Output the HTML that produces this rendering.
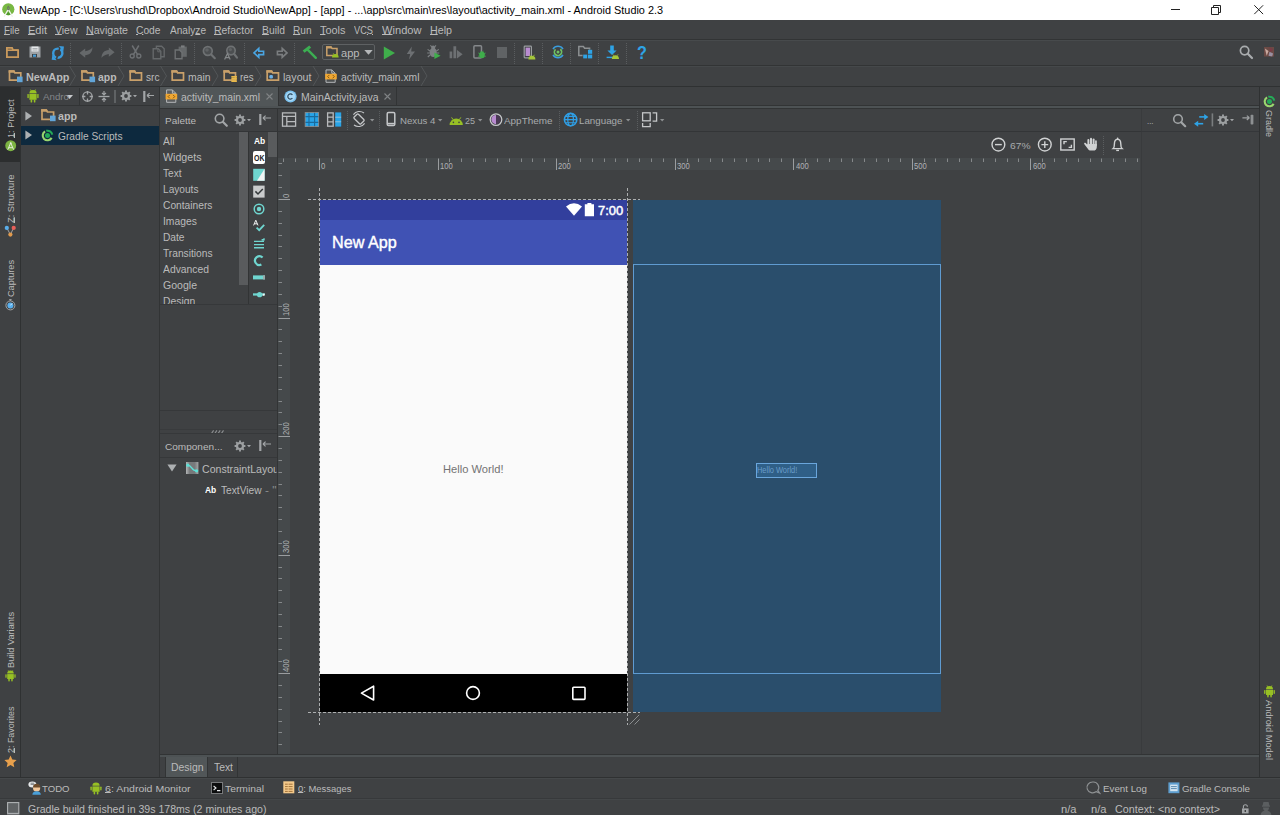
<!DOCTYPE html>
<html><head><meta charset="utf-8"><title>NewApp - Android Studio 2.3</title>
<style>
html,body{margin:0;padding:0;}
body{width:1280px;height:815px;overflow:hidden;background:#3f4143;position:relative;font-family:"Liberation Sans",sans-serif;}
.t{position:absolute;white-space:pre;line-height:1;transform-origin:0 0;}
.t u{text-decoration:underline;text-underline-offset:-0.4px;text-decoration-thickness:1px;}
.b{position:absolute;}
svg{position:absolute;overflow:visible;}
</style></head><body>
<!-- title bar -->
<div class="b" style="left:0;top:0;width:1280px;height:20px;background:#ffffff"></div>
<!-- ===== title bar icons ===== -->
<svg style="left:2px;top:3px" width="13" height="15" viewBox="0 0 13 15">
  <circle cx="6.3" cy="6.3" r="6.1" fill="#78b843"/>
  <path d="M3.4 10.4Q6.3 8.2 9.2 10.4L8.8 11.6Q6.3 12.6 3.8 11.6Z" fill="#4f9a2c"/>
  <path d="M6.3 6.4L2 13.8M6.3 6.4L10.6 13.8" stroke="#f1f3ee" stroke-width="1.3" fill="none"/>
  <path d="M6.3 2.6L7.6 4.4V6.2L6.3 7.4L5 6.2V4.4Z" fill="#6b6f6a"/>
  <circle cx="6.3" cy="5.2" r="0.7" fill="#78b843"/>
</svg>
<div class="b" style="left:1171px;top:9px;width:9px;height:1px;background:#222222"></div>
<svg style="left:1211px;top:4px" width="11" height="11" viewBox="0 0 11 11"><path d="M0.5 3.5h7v7h-7z M2.5 3.5v-2h7v7h-2" fill="none" stroke="#222222" stroke-width="1"/></svg>
<svg style="left:1254px;top:5px" width="10" height="10" viewBox="0 0 10 10"><path d="M0.3 0.3l8.8 8.8M9.1 0.3l-8.8 8.8" fill="none" stroke="#222222" stroke-width="1"/></svg>

<!-- ===== menu / toolbar / navbar separators ===== -->
<div class="b" style="left:0;top:39px;width:1280px;height:1px;background:#323435"></div>
<div class="b" style="left:0;top:40px;width:1280px;height:1px;background:#474a4c"></div>
<div class="b" style="left:0;top:65px;width:1280px;height:1px;background:#323435"></div>
<div class="b" style="left:0;top:66px;width:1280px;height:1px;background:#45484a"></div>
<div class="b" style="left:0;top:86px;width:1280px;height:1px;background:#2f3132"></div>

<!-- toolbar dotted separators -->
<svg style="left:0;top:40px" width="1280" height="26" viewBox="0 0 1280 26">
 <g stroke="#5a5d5f" stroke-width="1" stroke-dasharray="1 1" fill="none">
  <path d="M70.5 3V24M121.5 3V24M194.5 3V24M244.5 3V24M294.5 3V24M514.5 3V24M542.5 3V24M570.5 3V24M598.5 3V24M626.5 3V24"/>
 </g>
</svg>

<!-- ===== toolbar icons (y center 52) ===== -->
<!-- open folder -->
<svg style="left:6px;top:47px" width="13" height="12" viewBox="0 0 13 12"><path d="M0.9 0.9h5.2l1 2.2h5v7H0.9z" fill="none" stroke="#c9995c" stroke-width="1.8"/><path d="M0.9 3.2h11.2" stroke="#c9995c" stroke-width="1.6"/></svg>
<!-- save -->
<svg style="left:29px;top:46px" width="12" height="12" viewBox="0 0 12 12"><path d="M0.5 0.5h11v11h-11z" fill="#9da1a4"/><rect x="2.5" y="0.5" width="7" height="5" fill="#e6e8ea"/><rect x="3" y="8" width="5" height="3.5" fill="#3f4143"/><rect x="4" y="8.6" width="3" height="2.2" fill="#4a9fd8"/><path d="M3.5 2.5h5M3.5 4h5" stroke="#9da1a4" stroke-width="0.8"/></svg>
<!-- sync -->
<svg style="left:51px;top:46px" width="14" height="14" viewBox="0 0 14 14"><circle cx="6.8" cy="7.2" r="4.6" fill="none" stroke="#3a9bdc" stroke-width="2.4"/><path d="M9.4 0L5.2 14" stroke="#3f4143" stroke-width="1.6"/><path d="M7.6 0.2L12.6 0.2L12.6 5.4Z" fill="#3a9bdc" transform="rotate(8 10 3)"/><path d="M6 14L1 14L1 8.8Z" fill="#3a9bdc" transform="rotate(8 3.5 11.5)"/></svg>
<!-- undo / redo -->
<svg style="left:79px;top:47px" width="14" height="12" viewBox="0 0 14 12"><path d="M0.4 6L6.2 1.4V4.2C10.4 3.6 12.6 1.6 13.4 0.2C13.6 5 10.6 8 6.2 8.2V10.8Z" fill="#65686a"/></svg>
<svg style="left:100.5px;top:47px" width="14" height="12" viewBox="0 0 14 12"><path d="M0.4 6L6.2 1.4V4.2C10.4 3.6 12.6 1.6 13.4 0.2C13.6 5 10.6 8 6.2 8.2V10.8Z" fill="#65686a" transform="rotate(180 7 5.6)"/></svg>
<!-- cut -->
<svg style="left:129px;top:45px" width="13" height="14" viewBox="0 0 13 14"><path d="M3.2 0.5L8.6 9.6M9.8 0.5L4.4 9.6" stroke="#6d7073" stroke-width="1.5" fill="none"/><circle cx="3.2" cy="11" r="2" fill="none" stroke="#6d7073" stroke-width="1.4"/><circle cx="9.8" cy="11" r="2" fill="none" stroke="#6d7073" stroke-width="1.4"/></svg>
<!-- copy -->
<svg style="left:151.5px;top:45px" width="14" height="15" viewBox="0 0 14 15"><path d="M4.4 1.2h5.2l2.6 2.6v8H4.4z" fill="#3f4143" stroke="#65686a" stroke-width="1.4"/><path d="M1.2 3.8h5l2.6 2.6v7.4H1.2z" fill="#3f4143" stroke="#65686a" stroke-width="1.4"/><path d="M5.8 4.2v2.6h2.6" fill="none" stroke="#65686a" stroke-width="1"/></svg>
<!-- paste -->
<svg style="left:174px;top:45px" width="14" height="15" viewBox="0 0 14 15"><path d="M4.6 1.6h8.2v10.2H4.6z" fill="#65686a"/><rect x="7" y="0.4" width="3.6" height="2.2" fill="#7a7d7f"/><path d="M1.2 5h4.4l2.4 2.4v6.4H1.2z" fill="#3f4143" stroke="#6e7173" stroke-width="1.4"/></svg>
<!-- find -->
<svg style="left:202px;top:45px" width="14" height="15" viewBox="0 0 14 15"><circle cx="5.8" cy="6" r="4.4" fill="#4c4f51" stroke="#6e7173" stroke-width="1.7"/><circle cx="5" cy="5" r="1.8" fill="#606365"/><path d="M9.2 9.4L12.8 13.2" stroke="#6e7173" stroke-width="2.2" stroke-linecap="round"/></svg>
<!-- replace -->
<svg style="left:224px;top:45px" width="14" height="15" viewBox="0 0 14 15"><circle cx="7" cy="5.6" r="4.2" fill="#4c4f51" stroke="#6e7173" stroke-width="1.7"/><circle cx="6.4" cy="4.6" r="1.6" fill="#606365"/><path d="M10.2 9L13 12.6" stroke="#6e7173" stroke-width="2.2" stroke-linecap="round"/><path d="M0.6 14.6L3.4 8.6L6.2 14.6M1.6 12.6h3.6" fill="none" stroke="#85888a" stroke-width="1.2"/></svg>
<!-- back / forward -->
<svg style="left:253px;top:47px" width="12" height="12" viewBox="0 0 12 12"><path d="M1 5.9L5.8 1.4V4.2H10.6V7.6H5.8V10.4Z" fill="none" stroke="#4aa5e2" stroke-width="1.6" stroke-linejoin="miter"/></svg>
<svg style="left:275.5px;top:47px" width="12" height="12" viewBox="0 0 12 12"><path d="M11 5.9L6.2 1.4V4.2H1.4V7.6H6.2V10.4Z" fill="none" stroke="#7a7d7f" stroke-width="1.6" stroke-linejoin="miter"/></svg>
<!-- hammer (make) -->
<svg style="left:302px;top:45px" width="16" height="15" viewBox="0 0 16 15"><path d="M1.6 6.6L8.2 1.6" stroke="#3cae52" stroke-width="3" fill="none"/><path d="M5.6 4.6L13.8 12.8" stroke="#3cae52" stroke-width="2.4" fill="none" stroke-linecap="round"/></svg>
<!-- run config combo -->
<div class="b" style="left:322px;top:44px;width:53px;height:16px;border:1px solid #5e6163;border-radius:2px;box-sizing:border-box;background:#3e4143"></div>
<svg style="left:326px;top:46px" width="14" height="12" viewBox="0 0 14 12"><path d="M0.8 1h4.2l1.2 1.6H11v7H0.8z" fill="none" stroke="#c9a06a" stroke-width="1.5"/><path d="M0.05 0.25h5.4l1.1 2.3h-6.5z" fill="#c9a06a"/><path d="M6 11.4a3.3 3.3 0 0 1 6.6 0z" fill="#97c024"/><path d="M7.2 7.2l0.8 1.2M11.4 7.2l-0.8 1.2" stroke="#97c024" stroke-width="0.7"/></svg>
<svg style="left:364px;top:50px" width="9" height="5" viewBox="0 0 9 5"><path d="M0.3 0h8.4L4.5 4.8z" fill="#b4b7b9"/></svg>
<!-- run -->
<svg style="left:383px;top:45.8px" width="13" height="14" viewBox="0 0 13 14"><path d="M0.8 0.4L12 7L0.8 13.6Z" fill="#3fae4b"/></svg>
<!-- apply changes (lightning) -->
<svg style="left:406px;top:46px" width="10" height="14" viewBox="0 0 10 14"><path d="M5.8 0.4L0.8 8H4.2L3 13.6L9 5.4H5.2Z" fill="#6d7073"/></svg>
<!-- debug -->
<svg style="left:427px;top:45px" width="14" height="14" viewBox="0 0 14 14"><ellipse cx="6.2" cy="7.4" rx="3.6" ry="4.6" fill="#7d8083"/><circle cx="6.2" cy="2.6" r="2" fill="#7d8083"/><path d="M0.6 4.4L3 6M0.2 8H2.6M0.8 12L3 10M11.8 4.4L9.4 6M12.2 8H9.8M3.4 0.4L4.8 1.8M9 0.4L7.6 1.8" stroke="#7d8083" stroke-width="1.1"/><path d="M7.4 7.4L13.6 10.7L7.4 14Z" fill="#3fae4b"/></svg>
<!-- coverage -->
<svg style="left:449px;top:45px" width="14" height="14" viewBox="0 0 14 14"><path d="M0.6 6.4h2.6v6.8H0.6zM4.4 1.2h2.8v12H4.4z" fill="#6d7073"/><path d="M8 5L13.6 9.2L8 13.4Z" fill="#6d7073"/></svg>
<!-- attach debugger -->
<svg style="left:473px;top:45px" width="13" height="14" viewBox="0 0 13 14"><rect x="0.9" y="0.8" width="7.6" height="12.2" rx="1" fill="none" stroke="#85888b" stroke-width="1.5"/><ellipse cx="9" cy="10" rx="2.8" ry="3.2" fill="#3fae4b"/><path d="M5.4 8L7 9.2M5.2 11.2H6.6M12.6 8L11 9.2M12.8 11.2H11.4M7.6 5.8L8.4 7M10.4 5.8L9.6 7" stroke="#3fae4b" stroke-width="0.9"/></svg>
<!-- stop -->
<div class="b" style="left:496.5px;top:47px;width:10.5px;height:10.8px;background:#606365"></div>
<!-- AVD manager -->
<svg style="left:523px;top:45px" width="13" height="15" viewBox="0 0 13 15"><rect x="1.2" y="1.2" width="7.2" height="11.6" rx="0.8" fill="#3f4143" stroke="#9a9da0" stroke-width="1.2"/><rect x="2.6" y="2.6" width="4.4" height="8.4" fill="#b98cd0"/><path d="M5.4 14.4a3.5 3.6 0 0 1 7 0z" fill="#a4c639"/><path d="M6.4 9.8l0.9 1.3M11.4 9.8l-0.9 1.3" stroke="#a4c639" stroke-width="0.8"/></svg>
<!-- sync gradle -->
<svg style="left:551px;top:45px" width="14" height="14" viewBox="0 0 14 14"><path d="M2 4.2A5.8 5.8 0 0 1 12 4.2M12 9.8A5.8 5.8 0 0 1 2 9.8" fill="none" stroke="#3b9ddd" stroke-width="1.5"/><circle cx="7" cy="7" r="3.6" fill="none" stroke="#6fc163" stroke-width="1.7" stroke-dasharray="17 5.6" transform="rotate(-50 7 7)"/><circle cx="7" cy="7" r="1.5" fill="#6fc163"/></svg>
<!-- project structure -->
<svg style="left:578px;top:45px" width="15" height="14" viewBox="0 0 15 14"><path d="M0.8 1.6h4.6l1.2 1.6H11.6v7.4H0.8z" fill="none" stroke="#8d9092" stroke-width="1.5"/><rect x="4.6" y="4.6" width="10" height="9.2" fill="#3f4143"/><rect x="5.2" y="9.6" width="4" height="3.8" fill="#2ea3e6"/><rect x="10" y="9.6" width="4.2" height="3.8" fill="#2ea3e6"/><rect x="10" y="4.8" width="4.2" height="4" fill="#2ea3e6"/></svg>
<!-- sdk manager -->
<svg style="left:606px;top:45px" width="14" height="15" viewBox="0 0 14 15"><path d="M4.2 0.6h3.6v4.8h2.8L6 10L1.4 5.4h2.8z" fill="#2ea3e6"/><path d="M0.6 12.4h6" stroke="#2ea3e6" stroke-width="1.4"/><path d="M5.8 14a3.6 3.8 0 0 1 7.2 0z" fill="#a4c639"/><path d="M6.8 9.4l0.9 1.3M12 9.4l-0.9 1.3" stroke="#a4c639" stroke-width="0.8"/></svg>
<!-- help -->
<span class="t" style="left:636.5px;top:43.6px;font-size:18px;font-weight:bold;color:#2ea3e6;transform:scaleX(0.9)">?</span>
<!-- search everywhere + avatar -->
<svg style="left:1239px;top:45px" width="14" height="14" viewBox="0 0 14 14"><circle cx="5.6" cy="5.6" r="4.2" fill="none" stroke="#a9acae" stroke-width="1.7"/><path d="M8.8 8.8L13 13" stroke="#a9acae" stroke-width="2.2" stroke-linecap="round"/></svg>
<svg style="left:1264px;top:47px" width="10" height="9.6" viewBox="0 0 11 12" preserveAspectRatio="none"><rect x="0" y="0" width="11" height="12" fill="#6b4a45"/><path d="M1 2L5 5L3 11Z" fill="#c9a9a0"/><path d="M6 0L10 3L7 7Z" fill="#7b3b46"/><path d="M6 6L10 8L9 12L5 11Z" fill="#9a8fa0"/></svg>

<!-- ===== navbar (breadcrumbs) y 67-85, center 76 ===== -->
<svg style="left:0;top:66px" width="440" height="20" viewBox="0 0 440 20">
 <g fill="none" stroke="#525557" stroke-width="1">
  <path d="M69.5 0L75.5 10L69.5 20M118 0L124 10L118 20M160.5 0L166.5 10L160.5 20M212 0L218 10L212 20M255 0L261 10L255 20M313 0L319 10L313 20M421 0L427 10L421 20"/>
 </g>
 <!-- module folders -->
 <g id="modf">
  <path d="M9.5 5h4.4l1 1.8H20.8v7.4H9.5z" fill="none" stroke="#c9a06a" stroke-width="1.7"/><path d="M8.65 4.15h5.7l1.1 2.5h-6.8z" fill="#c9a06a"/>
  <rect x="17" y="10.6" width="5.6" height="5.6" fill="#62a5d8"/>
 </g>
 <g transform="translate(72.5 0)">
  <path d="M9.5 5h4.4l1 1.8H20.8v7.4H9.5z" fill="none" stroke="#c9a06a" stroke-width="1.7"/><path d="M8.65 4.15h5.7l1.1 2.5h-6.8z" fill="#c9a06a"/>
  <rect x="17" y="10.6" width="5.6" height="5.6" fill="#62a5d8"/>
 </g>
 <!-- plain folders: src, main -->
 <path d="M130.2 5h4.4l1 1.8H141.5v7.4H130.2z" fill="none" stroke="#c9a06a" stroke-width="1.7"/><path d="M129.35 4.15h5.7l1.1 2.5h-6.8z" fill="#c9a06a"/>
 <path d="M172.2 5h4.4l1 1.8H183.5v7.4H172.2z" fill="none" stroke="#c9a06a" stroke-width="1.7"/><path d="M171.35 4.15h5.7l1.1 2.5h-6.8z" fill="#c9a06a"/>
 <!-- res folder -->
 <path d="M224.2 5h4.4l1 1.8H235.5v7.4H224.2z" fill="none" stroke="#c9a06a" stroke-width="1.7"/><path d="M223.35 4.15h5.7l1.1 2.5h-6.8z" fill="#c9a06a"/>
 <g fill="#e9b949"><rect x="231.2" y="10" width="5.8" height="1.7" rx="0.6"/><rect x="231.2" y="12.1" width="5.8" height="1.7" rx="0.6"/><rect x="231.2" y="14.2" width="5.8" height="1.7" rx="0.6"/></g>
 <!-- layout folder -->
 <path d="M267.2 5h4.4l1 1.8H278.5v7.4H267.2z" fill="none" stroke="#c9a06a" stroke-width="1.7"/><path d="M266.35 4.15h5.7l1.1 2.5h-6.8z" fill="#c9a06a"/>
 <rect x="269.4" y="9.1" width="3.5" height="3.4" rx="1.2" fill="#6db1e6"/>
 <!-- xml file -->
 <g>
  <path d="M326 3.9h5.8l3.4 3.4v9H326z" fill="#4c4f51" stroke="#b4b7b9" stroke-width="1"/>
  <path d="M331.8 3.9v3.4h3.4" fill="none" stroke="#b4b7b9" stroke-width="1"/>
  <rect x="325.2" y="7.8" width="11.6" height="5.6" fill="#f0a732"/>
  <path d="M329.4 8.9l-1.7 1.7 1.7 1.7M332.6 8.9l1.7 1.7-1.7 1.7" fill="none" stroke="#7a5210" stroke-width="0.9"/>
 </g>
</svg>

<!-- ===== left tool stripe ===== -->
<div class="b" style="left:0;top:87px;width:20px;height:691px;background:#3f4143"></div>
<div class="b" style="left:0;top:87px;width:20px;height:75px;background:#2c2e2f"></div>
<div class="b" style="left:20px;top:87px;width:1px;height:691px;background:#2f3132"></div>
<!-- project icon (android studio) -->
<svg style="left:4.8px;top:140px" width="11.4" height="11.4" viewBox="0 0 13 13"><circle cx="6.5" cy="6.5" r="6.2" fill="#7cb342"/><path d="M3.2 11L6.5 3.4L9.8 11M4.4 8.8h4.2" fill="none" stroke="#e8efe2" stroke-width="1.1"/><circle cx="6.5" cy="3.6" r="1.1" fill="#e8efe2"/></svg>
<!-- structure icon -->
<svg style="left:4px;top:225px" width="13" height="13" viewBox="0 0 13 13"><path d="M2.8 2.9L6.4 9.6L9.6 2.9" fill="none" stroke="#a9acae" stroke-width="0.9"/><circle cx="2.8" cy="2.9" r="2.1" fill="#5aaeea"/><circle cx="9.7" cy="2.9" r="2.1" fill="#e8605a"/><circle cx="6.4" cy="9.6" r="2.1" fill="#e09a4e"/></svg>
<!-- captures icon -->
<svg style="left:4px;top:298px" width="13" height="13" viewBox="0 0 13 13"><circle cx="6.4" cy="7.4" r="4.5" fill="#3f4143" stroke="#a2a5a7" stroke-width="1"/><circle cx="6.4" cy="7.4" r="3" fill="#5ab0ee"/><path d="M5.2 1.6h2.4M6.4 1.6v1.4" stroke="#a2a5a7" stroke-width="1"/><path d="M6.4 7.4L8.2 5.4" stroke="#e8f2fa" stroke-width="0.9"/></svg>
<!-- build variants android -->
<svg style="left:5px;top:670px" width="11" height="12" viewBox="0 0 12 13"><g fill="#97c024"><path d="M2.4 4.4h7.2v5.4H2.4z"/><path d="M2.4 3.8a3.6 3.2 0 0 1 7.2 0z"/><rect x="0.4" y="4.5" width="1.4" height="4" rx="0.7"/><rect x="10.2" y="4.5" width="1.4" height="4" rx="0.7"/><rect x="3.6" y="9.4" width="1.6" height="3" rx="0.7"/><rect x="6.8" y="9.4" width="1.6" height="3" rx="0.7"/><path d="M3.4 0.2l1 1.6M8.6 0.2l-1 1.6" stroke="#97c024" stroke-width="0.7"/></g></svg>
<!-- favorites star -->
<svg style="left:4px;top:755px" width="13" height="13" viewBox="0 0 13 13"><path d="M6.5 0.6L8.3 4.6L12.6 5L9.4 7.9L10.3 12.2L6.5 10L2.7 12.2L3.6 7.9L0.4 5L4.7 4.6Z" fill="#e8a04c"/></svg>

<!-- ===== project panel (x 21-159) ===== -->
<div class="b" style="left:21px;top:87px;width:139px;height:19px;background:#3f4143"></div>
<div class="b" style="left:21px;top:105px;width:139px;height:1px;background:#323435"></div>
<div class="b" style="left:159px;top:87px;width:1px;height:691px;background:#323435"></div>
<!-- header icons -->
<svg style="left:27px;top:89px" width="12" height="14" viewBox="0 0 12 14"><g fill="#97c024"><path d="M2.4 4.8h7.2v6H2.4z"/><path d="M2.4 4.2a3.6 3.2 0 0 1 7.2 0z"/><rect x="0.4" y="4.9" width="1.4" height="4.4" rx="0.7"/><rect x="10.2" y="4.9" width="1.4" height="4.4" rx="0.7"/><rect x="3.6" y="10.4" width="1.6" height="3.2" rx="0.7"/><rect x="6.8" y="10.4" width="1.6" height="3.2" rx="0.7"/><path d="M3.4 0.4l1 1.6M8.6 0.4l-1 1.6" stroke="#97c024" stroke-width="0.7"/></g></svg>
<svg style="left:66px;top:95px" width="7" height="4" viewBox="0 0 7 4"><path d="M0 0h7L3.5 4z" fill="#c8cacc"/></svg>
<div class="b" style="left:79px;top:88px;width:1px;height:17px;background:#323435"></div>
<svg style="left:82px;top:91px" width="11" height="11" viewBox="0 0 11 11"><circle cx="5.5" cy="5.5" r="4.6" fill="none" stroke="#a2a5a7" stroke-width="1.3"/><path d="M5.5 0v3.4M5.5 7.6V11M0 5.5h3.4M7.6 5.5H11" stroke="#a2a5a7" stroke-width="1.3"/></svg>
<svg style="left:98px;top:91px" width="12" height="11" viewBox="0 0 12 11"><path d="M0.5 5.5h11" stroke="#a2a5a7" stroke-width="1.3"/><path d="M6 0v3.6M4 1.8L6 3.8L8 1.8M6 11V7.4M4 9.2L6 7.2L8 9.2" fill="none" stroke="#a2a5a7" stroke-width="1.2"/></svg>
<div class="b" style="left:114px;top:90px;width:2px;height:13px;background:#5f6264"></div>
<svg style="left:120px;top:90px" width="17" height="12" viewBox="0 0 17 12"><g transform="translate(6 6)"><circle r="3" fill="none" stroke="#9da0a2" stroke-width="2.2"/><g stroke="#9da0a2" stroke-width="1.9"><path d="M0-5.4V-3.6M0 5.4V3.6M-5.4 0H-3.6M5.4 0H3.6M-3.8-3.8L-2.6-2.6M3.8 3.8L2.6 2.6M-3.8 3.8L-2.6 2.6M3.8-3.8L2.6-2.6"/></g></g><path d="M13 5h4l-2 2.2z" fill="#a2a5a7"/></svg>
<svg style="left:143px;top:91px" width="11" height="11" viewBox="0 0 11 11"><rect x="0.2" y="0" width="2.2" height="11" fill="#a2a5a7"/><path d="M4 4.5h7M4 4.5l2.6-2.4M4 4.5l2.6 2.4" fill="none" stroke="#a2a5a7" stroke-width="1.2"/></svg>
<!-- tree rows -->
<div class="b" style="left:21px;top:126px;width:138px;height:19px;background:#0d293e"></div>
<svg style="left:25px;top:111px" width="8" height="10" viewBox="0 0 8 10"><path d="M0.4 0.6L7 5L0.4 9.4Z" fill="#adb0b2"/></svg>
<svg style="left:25px;top:130px" width="8" height="10" viewBox="0 0 8 10"><path d="M0.4 0.6L7 5L0.4 9.4Z" fill="#adb0b2"/></svg>
<svg style="left:41px;top:109px" width="15" height="13" viewBox="0 0 15 13"><path d="M1 1.2h4.4l1 1.8H12.6v7.4H1z" fill="none" stroke="#c9a06a" stroke-width="1.7"/><path d="M0.15 0.35h5.7l1.1 2.5h-6.8z" fill="#c9a06a"/><rect x="9" y="6.6" width="5.6" height="5.6" fill="#62a5d8"/></svg>
<svg style="left:41px;top:129px" width="13" height="13" viewBox="0 0 13 13"><path d="M10.66 8.90A4.8 4.8 0 1 1 4.10 2.34" fill="none" stroke="#9ad76f" stroke-width="2.1"/><path d="M5.26 1.86A4.8 4.8 0 0 1 11.23 5.67" fill="none" stroke="#25ab58" stroke-width="2.1"/><circle cx="6.5" cy="6.5" r="2.5" fill="#25ab58"/></svg>

<!-- ===== editor tabs (y 87-105) ===== -->
<div class="b" style="left:160px;top:87px;width:118px;height:19px;background:#515658"></div>
<div class="b" style="left:278px;top:105px;width:981px;height:1px;background:#323435"></div>
<div class="b" style="left:160px;top:106px;width:1099px;height:2px;background:#4d5254"></div>
<div class="b" style="left:160px;top:108px;width:1099px;height:1px;background:#323435"></div>
<div class="b" style="left:278px;top:87px;width:1px;height:18px;background:#323435"></div>
<div class="b" style="left:396px;top:87px;width:1px;height:18px;background:#323435"></div>
<!-- xml file icon in tab -->
<svg style="left:165px;top:89px" width="13" height="14" viewBox="0 0 13 14"><path d="M1.6 0.9h5.8l3.4 3.4v9H1.6z" fill="#5a5d5f" stroke="#b4b7b9" stroke-width="1"/><path d="M7.4 0.9v3.4h3.4" fill="none" stroke="#b4b7b9" stroke-width="1"/><rect x="0.6" y="4.8" width="11.6" height="5.6" fill="#f0a732"/><path d="M4.8 5.9l-1.7 1.7 1.7 1.7M8 5.9l1.7 1.7-1.7 1.7" fill="none" stroke="#7a5210" stroke-width="0.9"/></svg>
<svg style="left:266px;top:93px" width="7" height="7" viewBox="0 0 7 7"><path d="M0.5 0.5l6 6M6.5 0.5l-6 6" stroke="#808385" stroke-width="1.1"/></svg>
<!-- class icon -->
<svg style="left:284px;top:90px" width="13" height="13" viewBox="0 0 13 13"><circle cx="6.5" cy="6.5" r="6.1" fill="#7cc2ef"/><circle cx="6.5" cy="6.5" r="4.6" fill="#a9d8f5"/><path d="M8.4 4.8A2.6 2.6 0 1 0 8.4 8.2" fill="none" stroke="#2b4a60" stroke-width="1.2"/></svg>
<svg style="left:384px;top:93px" width="7" height="7" viewBox="0 0 7 7"><path d="M0.5 0.5l6 6M6.5 0.5l-6 6" stroke="#808385" stroke-width="1.1"/></svg>

<!-- ===== palette ===== -->
<div class="b" style="left:160px;top:131px;width:981px;height:1px;background:#333537"></div>
<div class="b" style="left:277px;top:109px;width:1px;height:647px;background:#323435"></div>
<!-- header icons -->
<svg style="left:214px;top:113px" width="14" height="14" viewBox="0 0 14 14"><circle cx="5.6" cy="5.6" r="4.3" fill="none" stroke="#a2a5a7" stroke-width="1.6"/><path d="M8.8 8.8L12.8 12.8" stroke="#a2a5a7" stroke-width="2.2" stroke-linecap="round"/></svg>
<svg style="left:234px;top:114px" width="17" height="12" viewBox="0 0 17 12"><g transform="translate(6 6)"><circle r="3" fill="none" stroke="#9da0a2" stroke-width="2.2"/><g stroke="#9da0a2" stroke-width="1.9"><path d="M0-5.4V-3.6M0 5.4V3.6M-5.4 0H-3.6M5.4 0H3.6M-3.8-3.8L-2.6-2.6M3.8 3.8L2.6 2.6M-3.8 3.8L-2.6 2.6M3.8-3.8L2.6-2.6"/></g></g><path d="M13 5h4l-2 2.2z" fill="#a2a5a7"/></svg>
<svg style="left:259px;top:114px" width="12" height="11" viewBox="0 0 12 11"><rect x="0.2" y="0" width="2.2" height="11" fill="#a2a5a7"/><path d="M4 4h8M4 4l2.6-2.4M4 4l2.6 2.4" fill="none" stroke="#a2a5a7" stroke-width="1.2"/></svg>
<!-- list scrollbars -->
<div class="b" style="left:239px;top:132px;width:9px;height:153px;background:#595b5d"></div>
<div class="b" style="left:248px;top:132px;width:1px;height:172px;background:#323435"></div>
<div class="b" style="left:268px;top:132px;width:9px;height:25px;background:#595b5d"></div>
<div class="b" style="left:160px;top:304px;width:117px;height:1px;background:#36383a"></div>
<!-- palette widget icons -->
<span class="t" style="left:253.8px;top:136.2px;font-size:9.4px;font-weight:bold;color:#ffffff;transform:scaleX(0.9)">Ab</span>
<div class="b" style="left:253px;top:151px;width:11.5px;height:12.5px;background:#ffffff;border-radius:2px"></div>
<span class="t" style="left:254px;top:153.5px;font-size:9px;font-weight:bold;color:#222;transform:scaleX(0.78)">OK</span>
<svg style="left:253px;top:168px" width="12" height="124" viewBox="0 0 12 124">
 <rect x="0.2" y="0.8" width="11.4" height="12" fill="#6fd6d0"/><path d="M11.6 0.8V12.8H4z" fill="#f2f4f4"/>
 <rect x="0.2" y="17.6" width="11.4" height="12" fill="#c9cbcc"/><path d="M2.4 23.4l2.6 2.6 4.8-5" fill="none" stroke="#33383a" stroke-width="1.5"/>
 <circle cx="6" cy="41" r="4.8" fill="none" stroke="#6fd6d0" stroke-width="1.5"/><circle cx="6" cy="41" r="2.2" fill="#6fd6d0"/>
 <path d="M0.6 57.4L2.8 52.2L5 57.4M1.4 55.8h2.8" fill="none" stroke="#f2f4f4" stroke-width="1"/><path d="M3.6 59.6l2.6 2.6 5-5.4" fill="none" stroke="#6fd6d0" stroke-width="1.8"/>
 <path d="M1 73.4h10M1 76.6h10M1 79.8h10M8.6 71.8h2.4v-1.6" fill="none" stroke="#6fd6d0" stroke-width="1.4"/>
 <path d="M9.6 89.6A4.4 4.4 0 1 0 8.4 96.6" fill="none" stroke="#6fd6d0" stroke-width="2.2"/>
 <rect x="0" y="107.4" width="12" height="4" fill="#6fd6d0"/><rect x="10" y="107.4" width="2" height="4" fill="#9aa"/>
 <path d="M0 126.4" /><rect x="0" y="125.4" width="12" height="1.6" fill="#6fd6d0" transform="translate(0 0)"/>
</svg>
<svg style="left:253px;top:289px" width="12" height="12" viewBox="0 0 12 12"><rect x="0" y="4.8" width="10" height="1.8" fill="#6fd6d0"/><circle cx="6.6" cy="5.7" r="2.6" fill="#6fd6d0"/><rect x="9.8" y="4.6" width="1.8" height="2.2" fill="#f2f4f4"/></svg>
<!-- palette bottom / splitter -->
<div class="b" style="left:160px;top:410px;width:117px;height:1px;background:#36383a"></div>
<div class="b" style="left:160px;top:429px;width:117px;height:1px;background:#393b3d"></div>
<svg style="left:211px;top:429.6px" width="14" height="4" viewBox="0 0 14 4"><path d="M0.6 3.4l2-3M3.9 3.4l2-3M7.2 3.4l2-3M10.5 3.4l2-3" stroke="#8a8d8f" stroke-width="1.1"/></svg>
<div class="b" style="left:160px;top:433px;width:117px;height:1px;background:#36383a"></div>
<!-- component tree header icons -->
<svg style="left:234px;top:440px" width="17" height="12" viewBox="0 0 17 12"><g transform="translate(6 6)"><circle r="3" fill="none" stroke="#9da0a2" stroke-width="2.2"/><g stroke="#9da0a2" stroke-width="1.9"><path d="M0-5.4V-3.6M0 5.4V3.6M-5.4 0H-3.6M5.4 0H3.6M-3.8-3.8L-2.6-2.6M3.8 3.8L2.6 2.6M-3.8 3.8L-2.6 2.6M3.8-3.8L2.6-2.6"/></g></g><path d="M13 5h4l-2 2.2z" fill="#a2a5a7"/></svg>
<svg style="left:259px;top:440px" width="12" height="11" viewBox="0 0 12 11"><rect x="0.2" y="0" width="2.2" height="11" fill="#a2a5a7"/><path d="M4 4h8M4 4l2.6-2.4M4 4l2.6 2.4" fill="none" stroke="#a2a5a7" stroke-width="1.2"/></svg>
<div class="b" style="left:160px;top:457px;width:117px;height:1px;background:#36383a"></div>
<!-- component tree rows -->
<svg style="left:167px;top:464px" width="10" height="8" viewBox="0 0 10 8"><path d="M0.4 0.4h9.2L5 7.6z" fill="#adb0b2"/></svg>
<svg style="left:185.8px;top:462px" width="13" height="12" viewBox="0 0 13 12"><defs><linearGradient id="clg" x1="0" x2="1" y1="0" y2="0"><stop offset="0" stop-color="#b4b6b7"/><stop offset="0.3" stop-color="#77797b"/><stop offset="0.7" stop-color="#77797b"/><stop offset="1" stop-color="#a4a6a7"/></linearGradient></defs><rect x="0" y="0" width="12.4" height="12" fill="url(#clg)"/><path d="M1.6 3.2C6.4 3.2 5 8.8 10.6 8.8" fill="none" stroke="#5ee0d6" stroke-width="1.4"/><circle cx="1.8" cy="3.2" r="1.6" fill="#5ee0d6"/><circle cx="10.6" cy="8.8" r="1.6" fill="#5ee0d6"/></svg>
<span class="t" style="left:205px;top:484.9px;font-size:9.4px;font-weight:bold;color:#ffffff;transform:scaleX(0.9)">Ab</span>

<!-- ===== design surface toolbar (y 109-131) ===== -->
<svg style="left:278px;top:109px" width="400" height="22" viewBox="0 0 400 22">
 <g stroke="#5a5d5f" stroke-width="1" stroke-dasharray="1 1" fill="none"><path d="M69.5 2V21M101.5 2V21M281.5 2V21M359.5 2V21"/></g>
 <!-- design view -->
 <g fill="none" stroke="#b8babc" stroke-width="1.3"><rect x="4.5" y="3.9" width="13.1" height="13.3"/><path d="M4.5 7.4h13.1M8.8 7.4v9.8M8.8 12.6h8.8"/></g>
 <!-- blueprint view (selected) -->
 <rect x="27.2" y="3.6" width="13.4" height="13.8" fill="#28a4e8" stroke="#8d9092" stroke-width="0.9"/><g stroke="#1a6a9c" stroke-width="1.1"><path d="M31 3.8v13.4M36.6 3.8v13.4M27.4 7.6h13M27.4 13.4h13"/></g>
 <!-- both -->
 <g fill="none" stroke="#b8babc" stroke-width="1.3"><rect x="49.6" y="3.9" width="5.6" height="13.3"/><path d="M49.6 8.2h5.6M49.6 12.8h5.6"/></g>
 <rect x="57.2" y="3.4" width="6" height="14.2" fill="#28a4e8"/><path d="M57.2 8.2h6M57.2 12.8h6" stroke="#a9c6d8" stroke-width="0.8"/>
 <!-- orientation -->
 <g transform="rotate(-45 81 10)" fill="none" stroke="#c4c6c8" stroke-width="1.3"><rect x="78" y="5.2" width="6" height="9.6" rx="1"/></g>
 <path d="M75.4 5.6A7.4 7.4 0 0 1 86 4M86.6 14.4A7.4 7.4 0 0 1 76 16" fill="none" stroke="#c4c6c8" stroke-width="1.1"/>
 <path d="M92 10h4.4l-2.2 2.4z" fill="#8d9092"/>
 <!-- device -->
 <rect x="109.2" y="3.4" width="7.6" height="13.2" rx="1.4" fill="none" stroke="#c4c6c8" stroke-width="1.5"/><path d="M109.2 14.6h7.6" stroke="#c4c6c8" stroke-width="1.6"/>
 <path d="M160 10h4.4l-2.2 2.4z" fill="#8d9092"/>
 <!-- api android -->
 <g fill="#97c024"><path d="M171.6 16a6.6 6.4 0 0 1 13.2 0z"/><path d="M173.6 8.4l1.4 2.2M182.8 8.4l-1.4 2.2" stroke="#97c024" stroke-width="1"/></g><circle cx="175.4" cy="13.4" r="0.8" fill="#3f4143"/><circle cx="181" cy="13.4" r="0.8" fill="#3f4143"/>
 <path d="M200 10h4.4l-2.2 2.4z" fill="#8d9092"/>
 <!-- theme -->
 <circle cx="218" cy="10.6" r="5.8" fill="#3f4143" stroke="#c4c6c8" stroke-width="1.3"/><path d="M218 6a4.6 4.6 0 0 0 0 9.2z" fill="#b88bd0"/><path d="M218 6a4.6 4.6 0 0 1 0 9.2z" fill="#4a3a55"/>
 <!-- globe -->
 <circle cx="292.6" cy="10.6" r="6.2" fill="none" stroke="#2f9fe6" stroke-width="1.6"/><ellipse cx="292.6" cy="10.6" rx="2.8" ry="6.2" fill="none" stroke="#2f9fe6" stroke-width="1.2"/><path d="M286.4 10.6h12.4M287.4 7.4h10.4M287.4 13.8h10.4" stroke="#2f9fe6" stroke-width="1.1"/>
 <path d="M348 10h4.4l-2.2 2.4z" fill="#8d9092"/>
 <!-- layout variants -->
 <g fill="none" stroke="#c4c6c8" stroke-width="1.3"><rect x="364.6" y="3.8" width="7.6" height="8"/><path d="M374.6 3.8h4v8.4h-4M364.6 14v3.6h7.6V14"/></g>
 <path d="M382 10h4.4l-2.2 2.4z" fill="#8d9092"/>
</svg>
<!-- zoom controls row (y 132-157) -->
<svg style="left:988px;top:134px" width="140" height="22" viewBox="0 0 140 22">
 <g fill="none" stroke="#d0d2d3" stroke-width="1.4">
  <circle cx="10.4" cy="10.6" r="6.4"/><path d="M7 10.6h6.8"/>
  <circle cx="56.8" cy="10.6" r="6.4"/><path d="M53.4 10.6h6.8M56.8 7.2v6.8"/>
  <rect x="72.8" y="5" width="13.4" height="11"/>
 </g>
 <path d="M76 10.2V7.6h2.8M83.4 10.8v2.6h-2.8" fill="none" stroke="#d0d2d3" stroke-width="1.4"/>
 <g fill="#d0d2d3"><rect x="99.4" y="5" width="2" height="7" rx="1"/><rect x="102" y="3.8" width="2" height="8" rx="1"/><rect x="104.6" y="4.4" width="2" height="8" rx="1"/><rect x="107.1" y="6.2" width="1.7" height="6" rx="0.85"/><path d="M99.4 10h9.4v3.2c0 2-1.6 3.4-3.4 3.4h-2.6c-1.2 0-2.2-0.6-2.8-1.6l-3.8-5c-0.5-0.9 0.7-1.7 1.5-1l1.7 1.8z"/></g>
 <path d="M115.5 2V21" stroke="#5a5d5f" stroke-width="1" stroke-dasharray="1 1"/>
 <path d="M125.2 14.6C126.4 13.6 126.4 12 126.4 10C126.4 7 128 5.4 129.6 5.4C131.2 5.4 132.8 7 132.8 10C132.8 12 132.8 13.6 134 14.6Z" fill="none" stroke="#d0d2d3" stroke-width="1.4"/><circle cx="129.6" cy="4.4" r="0.9" fill="#d0d2d3"/><path d="M128.2 16.4h2.8" stroke="#d0d2d3" stroke-width="1.4"/>
</svg>
<!-- ===== right (properties) panel x 1140-1258 ===== -->
<div class="b" style="left:1141px;top:109px;width:1px;height:646px;background:#393b3d"></div>
<div class="b" style="left:1141px;top:131px;width:118px;height:1px;background:#35373a"></div>
<svg style="left:1170px;top:112px" width="90" height="18" viewBox="0 0 90 18">
 <circle cx="8" cy="7" r="4.3" fill="none" stroke="#a2a5a7" stroke-width="1.6"/><path d="M11.2 10.2L15.2 14.2" stroke="#a2a5a7" stroke-width="2.2" stroke-linecap="round"/>
 <g fill="#2ea3e6" stroke="#2ea3e6" transform="translate(-0.8 0.3)"><path d="M30 4.6h6" stroke-width="1.6" fill="none"/><path d="M35 1.6L39.2 4.6L35 7.6Z" stroke="none"/><path d="M34 11.4h-6" stroke-width="1.6" fill="none"/><path d="M29 8.4L24.8 11.4L29 14.4Z" stroke="none"/></g>
 <rect x="41.6" y="1.4" width="1.6" height="13" fill="#7a7d7f"/>
 <g transform="translate(53 8)"><circle r="3" fill="none" stroke="#9da0a2" stroke-width="2.2"/><g stroke="#9da0a2" stroke-width="1.9"><path d="M0-5.4V-3.6M0 5.4V3.6M-5.4 0H-3.6M5.4 0H3.6M-3.8-3.8L-2.6-2.6M3.8 3.8L2.6 2.6M-3.8 3.8L-2.6 2.6M3.8-3.8L2.6-2.6"/></g></g><path d="M60 7h4l-2 2.2z" fill="#a2a5a7"/>
 <rect x="80.6" y="2.8" width="2.8" height="9.8" rx="0.8" fill="#8d9092"/><path d="M79.4 5.8h-7M79.4 5.8l-2.6-2.2M79.4 5.8l-2.6 2.2" fill="none" stroke="#9da0a2" stroke-width="1.2"/>
</svg>
<!-- ===== right tool stripe ===== -->
<div class="b" style="left:1259px;top:87px;width:1px;height:691px;background:#2f3132"></div>
<svg style="left:1263px;top:95px" width="13" height="13" viewBox="0 0 13 13"><path d="M10.66 8.90A4.8 4.8 0 1 1 4.10 2.34" fill="none" stroke="#9ad76f" stroke-width="2.1"/><path d="M5.26 1.86A4.8 4.8 0 0 1 11.23 5.67" fill="none" stroke="#25ab58" stroke-width="2.1"/><circle cx="6.5" cy="6.5" r="2.5" fill="#25ab58"/></svg>
<svg style="left:1263px;top:685px" width="13" height="13" viewBox="0 0 13 13"><g fill="#97c024"><path d="M3 4.8h7v5.2H3z"/><path d="M3 4.2a3.5 3.2 0 0 1 7 0z"/><rect x="1.1" y="4.9" width="1.4" height="4" rx="0.7"/><rect x="10.5" y="4.9" width="1.4" height="4" rx="0.7"/><rect x="4.2" y="9.6" width="1.5" height="2.8" rx="0.7"/><rect x="7.3" y="9.6" width="1.5" height="2.8" rx="0.7"/><path d="M4 0.4l1 1.6M9 0.4l-1 1.6" stroke="#97c024" stroke-width="0.7"/></g></svg>

<!-- ===== rulers ===== -->
<div class="b" style="left:278px;top:158px;width:862px;height:12px;background:#45494b"></div>
<div class="b" style="left:278px;top:158px;width:12px;height:596px;background:#45494b"></div>
<svg style="left:0;top:0" width="1280" height="815" viewBox="0 0 1280 815"><path d="M283.5 158.5V162M295.5 158.5V162M307.5 158.5V162M331.5 158.5V162M343.5 158.5V162M355.5 158.5V162M366.5 158.5V162M378.5 158.5V162M390.5 158.5V162M402.5 158.5V162M414.5 158.5V162M426.5 158.5V162M449.5 158.5V162M461.5 158.5V162M473.5 158.5V162M485.5 158.5V162M497.5 158.5V162M509.5 158.5V162M521.5 158.5V162M532.5 158.5V162M544.5 158.5V162M568.5 158.5V162M580.5 158.5V162M592.5 158.5V162M604.5 158.5V162M615.5 158.5V162M627.5 158.5V162M639.5 158.5V162M651.5 158.5V162M663.5 158.5V162M687.5 158.5V162M698.5 158.5V162M710.5 158.5V162M722.5 158.5V162M734.5 158.5V162M746.5 158.5V162M758.5 158.5V162M769.5 158.5V162M781.5 158.5V162M805.5 158.5V162M817.5 158.5V162M829.5 158.5V162M841.5 158.5V162M852.5 158.5V162M864.5 158.5V162M876.5 158.5V162M888.5 158.5V162M900.5 158.5V162M924.5 158.5V162M935.5 158.5V162M947.5 158.5V162M959.5 158.5V162M971.5 158.5V162M983.5 158.5V162M995.5 158.5V162M1007.5 158.5V162M1018.5 158.5V162M1042.5 158.5V162M1054.5 158.5V162M1066.5 158.5V162M1078.5 158.5V162M1090.5 158.5V162M1101.5 158.5V162M1113.5 158.5V162M1125.5 158.5V162M1137.5 158.5V162M278.5 163.5H282M278.5 175.5H282M278.5 187.5H282M278.5 211.5H282M278.5 223.5H282M278.5 235.5H282M278.5 246.5H282M278.5 258.5H282M278.5 270.5H282M278.5 282.5H282M278.5 294.5H282M278.5 306.5H282M278.5 329.5H282M278.5 341.5H282M278.5 353.5H282M278.5 365.5H282M278.5 377.5H282M278.5 389.5H282M278.5 401.5H282M278.5 412.5H282M278.5 424.5H282M278.5 448.5H282M278.5 460.5H282M278.5 472.5H282M278.5 484.5H282M278.5 495.5H282M278.5 507.5H282M278.5 519.5H282M278.5 531.5H282M278.5 543.5H282M278.5 567.5H282M278.5 578.5H282M278.5 590.5H282M278.5 602.5H282M278.5 614.5H282M278.5 626.5H282M278.5 638.5H282M278.5 649.5H282M278.5 661.5H282M278.5 685.5H282M278.5 697.5H282M278.5 709.5H282M278.5 721.5H282M278.5 732.5H282M278.5 744.5H282" stroke="#85888a" stroke-width="1" fill="none"/><path d="M319.5 158.5V170M438.5 158.5V170M556.5 158.5V170M675.5 158.5V170M793.5 158.5V170M912.5 158.5V170M1030.5 158.5V170M278.5 199.5H290M278.5 318.5H290M278.5 436.5H290M278.5 555.5H290M278.5 673.5H290" stroke="#9a9d9f" stroke-width="1" fill="none"/></svg>
<span class="t" style="left:321.3px;top:161.9px;font-size:8.5px;color:#b0b2b4;transform:scaleX(0.9)">0</span>
<span class="t" style="left:439.9px;top:161.9px;font-size:8.5px;color:#b0b2b4;transform:scaleX(0.9)">100</span>
<span class="t" style="left:558.4px;top:161.9px;font-size:8.5px;color:#b0b2b4;transform:scaleX(0.9)">200</span>
<span class="t" style="left:676.9px;top:161.9px;font-size:8.5px;color:#b0b2b4;transform:scaleX(0.9)">300</span>
<span class="t" style="left:795.5px;top:161.9px;font-size:8.5px;color:#b0b2b4;transform:scaleX(0.9)">400</span>
<span class="t" style="left:914.0px;top:161.9px;font-size:8.5px;color:#b0b2b4;transform:scaleX(0.9)">500</span>
<span class="t" style="left:1032.6px;top:161.9px;font-size:8.5px;color:#b0b2b4;transform:scaleX(0.9)">600</span>
<span class="t" style="left:281.9px;top:197.7px;font-size:8.5px;color:#b0b2b4;transform:rotate(-90deg) scaleX(0.9)">0</span>
<span class="t" style="left:281.9px;top:316.2px;font-size:8.5px;color:#b0b2b4;transform:rotate(-90deg) scaleX(0.9)">100</span>
<span class="t" style="left:281.9px;top:434.8px;font-size:8.5px;color:#b0b2b4;transform:rotate(-90deg) scaleX(0.9)">200</span>
<span class="t" style="left:281.9px;top:553.4px;font-size:8.5px;color:#b0b2b4;transform:rotate(-90deg) scaleX(0.9)">300</span>
<span class="t" style="left:281.9px;top:671.9px;font-size:8.5px;color:#b0b2b4;transform:rotate(-90deg) scaleX(0.9)">400</span>

<!-- ===== phone preview ===== -->
<div class="b" style="left:320px;top:200px;width:307px;height:20px;background:#323f9d"></div>
<div class="b" style="left:320px;top:220px;width:307px;height:44.5px;background:#4052b4"></div>
<div class="b" style="left:320px;top:264.5px;width:307px;height:409.5px;background:#fafafa"></div>
<div class="b" style="left:320px;top:674px;width:307px;height:38px;background:#000000"></div>
<!-- status icons -->
<svg style="left:565px;top:202px" width="32" height="16" viewBox="0 0 32 16"><path d="M1 4.4Q9 -1.8 17 4.4L9 13.8Z" fill="#ffffff"/><path d="M22.4 1h4v1.3h2.6v12h-9.2v-12h2.6z" fill="#ffffff"/></svg>
<!-- nav icons -->
<svg style="left:355px;top:683px" width="240" height="20" viewBox="0 0 240 20"><g fill="none" stroke="#ffffff" stroke-width="1.6"><path d="M18.6 3.2V17L6.4 10.1Z" stroke-linejoin="round"/><circle cx="118" cy="10" r="6.4"/><rect x="217.8" y="4.2" width="12.2" height="12.2" rx="0.8"/></g></svg>
<!-- dashed guides -->
<svg style="left:300px;top:180px" width="350" height="550" viewBox="0 0 350 550"><g fill="none" stroke="#adafb0" stroke-width="1" stroke-dasharray="3 2"><path d="M8 19.5H340M8 532.5H340M19.5 8V545M327.5 8V545"/></g><path d="M329.5 544.5L339.2 534.8M334.5 544.5L339.6 539.4" stroke="#8a8d8f" stroke-width="1" fill="none"/></svg>
<!-- ===== blueprint ===== -->
<div class="b" style="left:633px;top:200px;width:308px;height:512px;background:#2a4e6c"></div>
<div class="b" style="left:633px;top:264px;width:308px;height:410px;border:1px solid #5f9bd1;box-sizing:border-box"></div>
<div class="b" style="left:756px;top:463px;width:61px;height:14.5px;border:1px solid #6aa6dc;box-sizing:border-box;background:#2f5f87"></div>
<!-- ===== editor bottom (design/text tabs) ===== -->
<div class="b" style="left:160px;top:755px;width:1099px;height:2px;background:#4d5254"></div>
<div class="b" style="left:160px;top:754px;width:1099px;height:1px;background:#323435"></div>
<div class="b" style="left:166px;top:757px;width:41px;height:20px;background:#515658"></div>
<div class="b" style="left:165px;top:757px;width:1px;height:20px;background:#323435"></div>
<div class="b" style="left:207px;top:757px;width:1px;height:20px;background:#323435"></div>
<div class="b" style="left:237px;top:757px;width:1px;height:20px;background:#323435"></div>
<!-- ===== bottom tool stripe (y 778-799) ===== -->
<div class="b" style="left:0;top:777px;width:1280px;height:1px;background:#2f3132"></div>
<div class="b" style="left:0;top:778px;width:1280px;height:1px;background:#45484a"></div>
<div class="b" style="left:0;top:798px;width:1280px;height:1px;background:#37393b"></div>
<div class="b" style="left:0;top:799px;width:1280px;height:1px;background:#444749"></div>
<!-- TODO icon -->
<svg style="left:28px;top:781px" width="14" height="14" viewBox="0 0 14 14"><ellipse cx="4.4" cy="3.4" rx="4" ry="3" fill="#e6e8ea"/><path d="M2.6 3.4h3.6M2.6 2.2h3.6" stroke="#55585a" stroke-width="0.7"/><circle cx="8.6" cy="7" r="3.6" fill="#f2c79a"/><path d="M5 6.4a3.6 3.6 0 0 1 7.2 0z" fill="#6b4a2a"/><path d="M4.4 13.8a4.2 3.6 0 0 1 8.4 0z" fill="#4a9fd8"/></svg>
<!-- android monitor -->
<svg style="left:90px;top:782px" width="12" height="13" viewBox="0 0 12 13"><g fill="#97c024"><path d="M2.4 4.4h7.2v5.4H2.4z"/><path d="M2.4 3.8a3.6 3.2 0 0 1 7.2 0z"/><rect x="0.4" y="4.5" width="1.4" height="4" rx="0.7"/><rect x="10.2" y="4.5" width="1.4" height="4" rx="0.7"/><rect x="3.6" y="9.4" width="1.6" height="3" rx="0.7"/><rect x="6.8" y="9.4" width="1.6" height="3" rx="0.7"/></g></svg>
<!-- terminal -->
<svg style="left:211px;top:782px" width="12" height="12" viewBox="0 0 12 12"><rect x="0.5" y="0.5" width="11" height="11" fill="#0c0d0e" stroke="#77797b" stroke-width="1"/><path d="M2.6 4l2.4 2-2.4 2M6 8.6h3.4" fill="none" stroke="#e6e8ea" stroke-width="1.1"/></svg>
<!-- messages -->
<svg style="left:283px;top:781px" width="12" height="13" viewBox="0 0 12 13"><rect x="0.3" y="0.3" width="11" height="12" fill="#f4c98a"/><path d="M2 3.2h7.6M2 5.6h7.6M2 8h7.6M2 10.4h7.6" stroke="#a1733a" stroke-width="1"/><path d="M5.2 1.6v10" stroke="#f4c98a" stroke-width="0.8"/></svg>
<!-- event log -->
<svg style="left:1086px;top:781px" width="15" height="14" viewBox="0 0 15 14"><path d="M7 1A5.8 5.4 0 1 0 10.4 10.6L13.6 12L11.8 9.4A5.4 5.4 0 0 0 7 1Z" fill="none" stroke="#8f9294" stroke-width="1.2"/></svg>
<!-- gradle console -->
<svg style="left:1168px;top:782px" width="12" height="12" viewBox="0 0 12 12"><rect x="0.4" y="0.4" width="11" height="10.8" fill="#5f9fd0"/><rect x="2.2" y="2.6" width="7.4" height="6.6" fill="#d6e6f2"/><path d="M3 4.6h5.8M3 6.6h5.8" stroke="#4c7fa8" stroke-width="0.9"/></svg>
<!-- status bar icons -->
<svg style="left:7px;top:802px" width="13" height="13" viewBox="0 0 13 13"><rect x="0.6" y="0.6" width="11.2" height="10.8" fill="#5f6264" stroke="#b0b3b5" stroke-width="1.1"/><path d="M0 12.8h12.4" stroke="#8d9092" stroke-width="0.8"/></svg>
<svg style="left:1241px;top:804px" width="9" height="10" viewBox="0 0 9 10"><rect x="1" y="4.4" width="6.6" height="5" fill="#a2a5a7"/><path d="M2.4 4.4V2.8a2 2 0 0 1 4 0" fill="none" stroke="#a2a5a7" stroke-width="1.1"/><rect x="3.6" y="6" width="1.4" height="2" fill="#3f4143"/></svg>
<svg style="left:1259px;top:801px" width="14" height="14" viewBox="0 0 14 14"><path d="M3 4.6h8v1.2H3zM4.4 1h5.2l0.8 3.6H3.6zM4 6.4h6a3 3.4 0 0 1 -6 0zM1.6 14a5.4 4.6 0 0 1 10.8 0z" fill="#5b5e60"/></svg>

<span class="t" style="left:18.50px;top:5.43px;font-size:11.3px;color:#000000;transform:scaleX(0.9622);">NewApp - [C:\Users\rushd\Dropbox\Android Studio\NewApp] - [app] - ...\app\src\main\res\layout\activity_main.xml - Android Studio 2.3</span>
<span class="t" style="left:4.00px;top:24.52px;font-size:11.2px;color:#bbbbbb;transform:scaleX(0.8596);"><u>F</u>ile</span>
<span class="t" style="left:28.00px;top:24.52px;font-size:11.2px;color:#bbbbbb;transform:scaleX(0.9854);"><u>E</u>dit</span>
<span class="t" style="left:55.00px;top:24.52px;font-size:11.2px;color:#bbbbbb;transform:scaleX(0.9357);"><u>V</u>iew</span>
<span class="t" style="left:85.50px;top:24.52px;font-size:11.2px;color:#bbbbbb;transform:scaleX(0.9512);"><u>N</u>avigate</span>
<span class="t" style="left:136.00px;top:24.52px;font-size:11.2px;color:#bbbbbb;transform:scaleX(0.9159);"><u>C</u>ode</span>
<span class="t" style="left:169.50px;top:24.52px;font-size:11.2px;color:#bbbbbb;transform:scaleX(0.9042);">Analy<u>z</u>e</span>
<span class="t" style="left:214.00px;top:24.52px;font-size:11.2px;color:#bbbbbb;transform:scaleX(0.9342);"><u>R</u>efactor</span>
<span class="t" style="left:262.00px;top:24.52px;font-size:11.2px;color:#bbbbbb;transform:scaleX(0.9240);"><u>B</u>uild</span>
<span class="t" style="left:293.00px;top:24.52px;font-size:11.2px;color:#bbbbbb;transform:scaleX(0.9011);"><u>R</u>un</span>
<span class="t" style="left:320.00px;top:24.52px;font-size:11.2px;color:#bbbbbb;transform:scaleX(0.9761);"><u>T</u>ools</span>
<span class="t" style="left:354.00px;top:24.52px;font-size:11.2px;color:#bbbbbb;transform:scaleX(0.8255);">VC<u>S</u></span>
<span class="t" style="left:381.50px;top:24.52px;font-size:11.2px;color:#bbbbbb;transform:scaleX(0.9925);"><u>W</u>indow</span>
<span class="t" style="left:429.50px;top:24.52px;font-size:11.2px;color:#bbbbbb;transform:scaleX(0.9559);"><u>H</u>elp</span>
<span class="t" style="left:341.30px;top:47.82px;font-size:11.2px;color:#bbbbbb;transform:scaleX(0.9908);">app</span>
<span class="t" style="left:25.50px;top:71.62px;font-size:11.2px;color:#bbbbbb;transform:scaleX(0.9721);font-weight:bold;">NewApp</span>
<span class="t" style="left:98.00px;top:71.62px;font-size:11.2px;color:#bbbbbb;transform:scaleX(0.9301);font-weight:bold;">app</span>
<span class="t" style="left:146.00px;top:71.62px;font-size:11.2px;color:#bbbbbb;transform:scaleX(0.9047);">src</span>
<span class="t" style="left:188.00px;top:71.62px;font-size:11.2px;color:#bbbbbb;transform:scaleX(0.9278);">main</span>
<span class="t" style="left:240.00px;top:71.62px;font-size:11.2px;color:#bbbbbb;transform:scaleX(0.8683);">res</span>
<span class="t" style="left:283.00px;top:71.62px;font-size:11.2px;color:#bbbbbb;transform:scaleX(0.9545);">layout</span>
<span class="t" style="left:341.00px;top:71.62px;font-size:11.2px;color:#bbbbbb;transform:scaleX(0.9217);">activity_main.xml</span>
<span class="t" style="left:43.00px;top:92.51px;font-size:9.2px;color:#83868a;transform:scaleX(1.0599);">Andro</span>
<span class="t" style="left:58.00px;top:110.82px;font-size:11.2px;color:#bbbbbb;transform:scaleX(0.9552);font-weight:bold;">app</span>
<span class="t" style="left:58.00px;top:130.82px;font-size:11.2px;color:#bbbbbb;transform:scaleX(0.9099);">Gradle Scripts</span>
<span class="t" style="left:7.00px;top:137.50px;font-size:9.2px;color:#bbbbbb;transform:rotate(-90deg) scaleX(0.9919);"><u>1</u>: Project</span>
<span class="t" style="left:7.00px;top:223.00px;font-size:9.2px;color:#bbbbbb;transform:rotate(-90deg) scaleX(1.0104);"><u>Z</u>: Structure</span>
<span class="t" style="left:7.00px;top:297.00px;font-size:9.2px;color:#bbbbbb;transform:rotate(-90deg) scaleX(0.9925);">Captures</span>
<span class="t" style="left:7.00px;top:667.50px;font-size:9.2px;color:#bbbbbb;transform:rotate(-90deg) scaleX(0.9997);">Build Variants</span>
<span class="t" style="left:7.00px;top:752.50px;font-size:9.2px;color:#bbbbbb;transform:rotate(-90deg) scaleX(0.9688);"><u>2</u>: Favorites</span>
<span class="t" style="left:1273.40px;top:110.00px;font-size:9.2px;color:#bbbbbb;transform:rotate(90deg) scaleX(0.9790);">Gradle</span>
<span class="t" style="left:1273.40px;top:700.00px;font-size:9.2px;color:#bbbbbb;transform:rotate(90deg) scaleX(1.0127);">Android Model</span>
<span class="t" style="left:180.50px;top:92.01px;font-size:11.8px;color:#bbbbbb;transform:scaleX(0.8796);">activity_main.xml</span>
<span class="t" style="left:300.50px;top:92.01px;font-size:11.8px;color:#bbbbbb;transform:scaleX(0.8910);">MainActivity.java</span>
<span class="t" style="left:164.50px;top:117.01px;font-size:9.2px;color:#bbbbbb;transform:scaleX(1.0836);">Palette</span>
<span class="t" style="left:162.50px;top:135.61px;font-size:11.8px;color:#bbbbbb;transform:scaleX(0.8762);">All</span>
<span class="t" style="left:162.50px;top:151.61px;font-size:11.8px;color:#bbbbbb;transform:scaleX(0.9032);">Widgets</span>
<span class="t" style="left:162.50px;top:167.61px;font-size:11.8px;color:#bbbbbb;transform:scaleX(0.8549);">Text</span>
<span class="t" style="left:162.50px;top:183.61px;font-size:11.8px;color:#bbbbbb;transform:scaleX(0.8590);">Layouts</span>
<span class="t" style="left:162.50px;top:199.61px;font-size:11.8px;color:#bbbbbb;transform:scaleX(0.8675);">Containers</span>
<span class="t" style="left:162.50px;top:215.61px;font-size:11.8px;color:#bbbbbb;transform:scaleX(0.8737);">Images</span>
<span class="t" style="left:162.50px;top:231.61px;font-size:11.8px;color:#bbbbbb;transform:scaleX(0.8627);">Date</span>
<span class="t" style="left:162.50px;top:247.61px;font-size:11.8px;color:#bbbbbb;transform:scaleX(0.8644);">Transitions</span>
<span class="t" style="left:162.50px;top:263.61px;font-size:11.8px;color:#bbbbbb;transform:scaleX(0.8765);">Advanced</span>
<span class="t" style="left:162.50px;top:279.61px;font-size:11.8px;color:#bbbbbb;transform:scaleX(0.8936);">Google</span>
<span class="t" style="left:162.50px;top:295.61px;font-size:11.8px;color:#bbbbbb;transform:scaleX(0.8766);display:block;overflow:hidden;height:8.39px;">Design</span>
<span class="t" style="left:399.50px;top:116.10px;font-size:9.8px;color:#a8abad;transform:scaleX(0.9874);">Nexus 4</span>
<span class="t" style="left:464.50px;top:116.10px;font-size:9.8px;color:#a8abad;transform:scaleX(0.9169);">25</span>
<span class="t" style="left:504.00px;top:116.10px;font-size:9.8px;color:#a8abad;transform:scaleX(1.0117);">AppTheme</span>
<span class="t" style="left:579.00px;top:116.10px;font-size:9.8px;color:#a8abad;transform:scaleX(0.9978);">Language</span>
<span class="t" style="left:1010.00px;top:141.51px;font-size:9.2px;color:#a8abad;transform:scaleX(1.1147);">67%</span>
<span class="t" style="left:1147.00px;top:117.01px;font-size:9.2px;color:#a8abad;transform:scaleX(0.8473);">...</span>
<span class="t" style="left:164.50px;top:443.11px;font-size:9.2px;color:#bbbbbb;transform:scaleX(1.0930);">Componen...</span>
<span class="t" style="left:202.00px;top:463.52px;font-size:11.2px;color:#bbbbbb;transform:scaleX(0.9450);display:block;overflow:hidden;width:79.37px;">ConstraintLayou</span>
<span class="t" style="left:220.50px;top:484.62px;font-size:11.2px;color:#bbbbbb;transform:scaleX(0.9085);">TextView</span>
<span class="t" style="left:264.50px;top:484.62px;font-size:11.2px;color:#8a8d8f;transform:scaleX(1.0636);">- &quot;</span>
<span class="t" style="left:171.00px;top:761.92px;font-size:11.2px;color:#bbbbbb;transform:scaleX(0.9332);">Design</span>
<span class="t" style="left:214.00px;top:761.92px;font-size:11.2px;color:#bbbbbb;transform:scaleX(0.9254);">Text</span>
<span class="t" style="left:42.00px;top:784.91px;font-size:9.2px;color:#bbbbbb;transform:scaleX(1.0427);">TODO</span>
<span class="t" style="left:104.50px;top:784.91px;font-size:9.2px;color:#bbbbbb;transform:scaleX(1.1464);"><u>6</u>: Android Monitor</span>
<span class="t" style="left:225.00px;top:784.91px;font-size:9.2px;color:#bbbbbb;transform:scaleX(1.1233);">Terminal</span>
<span class="t" style="left:297.50px;top:784.91px;font-size:9.2px;color:#bbbbbb;transform:scaleX(1.0270);"><u>0</u>: Messages</span>
<span class="t" style="left:1103.00px;top:784.91px;font-size:9.2px;color:#bbbbbb;transform:scaleX(1.0630);">Event Log</span>
<span class="t" style="left:1182.00px;top:784.91px;font-size:9.2px;color:#bbbbbb;transform:scaleX(1.0651);">Gradle Console</span>
<span class="t" style="left:27.50px;top:803.72px;font-size:11.2px;color:#bbbbbb;transform:scaleX(0.9446);">Gradle build finished in 39s 178ms (2 minutes ago)</span>
<span class="t" style="left:1061.00px;top:803.72px;font-size:11.2px;color:#bbbbbb;transform:scaleX(0.9960);">n/a</span>
<span class="t" style="left:1090.50px;top:803.72px;font-size:11.2px;color:#bbbbbb;transform:scaleX(0.9960);">n/a</span>
<span class="t" style="left:1114.50px;top:803.72px;font-size:11.2px;color:#bbbbbb;transform:scaleX(0.9592);">Context: &lt;no context&gt;</span>
<span class="t" style="left:598.00px;top:205.32px;font-size:12.5px;color:#ffffff;transform:scaleX(1.0393);-webkit-text-stroke:0.45px #fff;">7:00</span>
<span class="t" style="left:331.80px;top:234.76px;font-size:16px;color:#ffffff;transform:scaleX(1.0102);-webkit-text-stroke:0.4px #fff;">New App</span>
<span class="t" style="left:443.00px;top:463.69px;font-size:11px;color:#737373;transform:scaleX(1.0131);">Hello World!</span>
<span class="t" style="left:757.00px;top:466.20px;font-size:8.5px;color:#6a9dc9;transform:scaleX(0.8734);">Hello World!</span>
</body></html>
